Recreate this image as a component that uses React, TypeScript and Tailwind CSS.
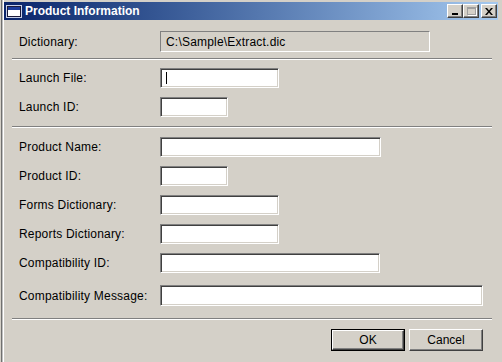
import React from 'react';

const font = { fontFamily: '"Liberation Sans", Arial, sans-serif' };

const sunken =
  'bg-white border border-t-[#808080] border-l-[#808080] border-b-white border-r-white shadow-[inset_1px_1px_0_#404040,inset_-1px_-1px_0_#d4d0c8]';

const Separator: React.FC<{ className: string }> = ({ className }) => (
  <div className={`ml-[-7px] w-[480px] border-t border-b border-t-[#808080] border-b-white ${className}`} />
);

const Row: React.FC<{ label: string; className: string; children: React.ReactNode }> = ({ label, className, children }) => (
  <div className={`flex items-center ${className}`}>
    <span className="w-[141px] shrink-0 text-[12px] tracking-[0.2px] leading-none text-black">{label}</span>
    {children}
  </div>
);

const TitleButton: React.FC<{ className?: string; children: React.ReactNode }> = ({ className = '', children }) => (
  <div
    className={`w-[16px] h-[14px] bg-[#d4d0c8] flex items-center justify-center border border-t-white border-l-white border-b-[#404040] border-r-[#404040] shadow-[inset_-1px_-1px_0_#808080] ${className}`}
  >
    {children}
  </div>
);

export default function App() {
  return (
    <div
      className="w-[502px] h-[362px] overflow-hidden bg-[#d4d0c8] shadow-[inset_1px_0_0_#d4d0c8,inset_2px_0_0_#707070,inset_3px_0_0_#c0c0c0,inset_4px_0_0_#ffffff]"
      style={font}
    >
      {/* title bar */}
      <div className="ml-[4px] mt-[2px] w-[494px] h-[18px] flex items-center bg-gradient-to-r from-[#0a246a] to-[#a6caf0]">
        <svg className="ml-[2px] w-[16px] h-[13px]" viewBox="0 0 16 13">
          <rect x="0" y="0" width="16" height="13" fill="#c8d0e8" />
          <rect x="1" y="1" width="14" height="11" fill="#1a1a3a" />
          <rect x="2" y="2" width="12" height="3" fill="#1c3c9c" />
          <rect x="2" y="5" width="12" height="6" fill="#ffffff" />
        </svg>
        <span className="ml-[3px] text-[12px] font-bold text-white leading-none">Product Information</span>
        <div className="ml-auto mr-[1px] flex items-center">
          <TitleButton>
            <div className="mt-[6px] ml-[-1px] w-[6px] h-[2px] bg-black" />
          </TitleButton>
          <TitleButton>
            <div className="w-[9px] h-[8px] border border-[#a0a0a0] border-t-2 shadow-[1px_1px_0_#ffffff]" />
          </TitleButton>
          <TitleButton className="ml-[2px]">
            <svg className="w-[8px] h-[7px]" viewBox="0 0 8 7">
              <path d="M0 0 L2 0 L4 2.5 L6 0 L8 0 L5 3.5 L8 7 L6 7 L4 4.5 L2 7 L0 7 L3 3.5 Z" fill="#000" />
            </svg>
          </TitleButton>
        </div>
      </div>

      {/* form body */}
      <div className="pl-[19px] flex flex-col">
        <Row label="Dictionary:" className="mt-[11px]">
          <div className="w-[270px] h-[21px] flex items-center pl-[5px] text-[12px] tracking-[0.2px] text-black border border-t-[#808080] border-l-[#808080] border-b-white border-r-white">
            C:\Sample\Extract.dic
          </div>
        </Row>
        <Separator className="mt-[6px]" />

        <Row label="Launch File:" className="mt-[8px]">
          <div className={`w-[119px] h-[20px] flex items-center pl-[5px] ${sunken}`}>
            <div className="w-[1px] h-[12px] bg-black" />
          </div>
        </Row>
        <Row label="Launch ID:" className="mt-[9px]">
          <div className={`w-[68px] h-[20px] ${sunken}`} />
        </Row>
        <Separator className="mt-[9px]" />

        <Row label="Product Name:" className="mt-[9px]">
          <div className={`w-[221px] h-[20px] ${sunken}`} />
        </Row>
        <Row label="Product ID:" className="mt-[9px]">
          <div className={`w-[68px] h-[20px] ${sunken}`} />
        </Row>
        <Row label="Forms Dictionary:" className="mt-[9px]">
          <div className={`w-[119px] h-[20px] ${sunken}`} />
        </Row>
        <Row label="Reports Dictionary:" className="mt-[9px]">
          <div className={`w-[119px] h-[20px] ${sunken}`} />
        </Row>
        <Row label="Compatibility ID:" className="mt-[9px]">
          <div className={`w-[220px] h-[20px] ${sunken}`} />
        </Row>
        <Row label="Compatibility Message:" className="mt-[12px]">
          <div className={`w-[323px] h-[21px] ${sunken}`} />
        </Row>
        <Separator className="mt-[12px]" />

        <div className="mt-[9px] mr-[19px] flex justify-end gap-[4px]">
          <div className="w-[74px] h-[22px] border border-black">
            <div className="w-full h-full flex items-center justify-center text-[12px] text-black border border-t-white border-l-white border-b-[#404040] border-r-[#404040] shadow-[inset_-1px_-1px_0_#808080]">
              OK
            </div>
          </div>
          <div className="w-[74px] h-[22px] flex items-center justify-center text-[12px] text-black border border-t-white border-l-white border-b-[#404040] border-r-[#404040] shadow-[inset_-1px_-1px_0_#808080]">
            Cancel
          </div>
        </div>
      </div>
    </div>
  );
}
